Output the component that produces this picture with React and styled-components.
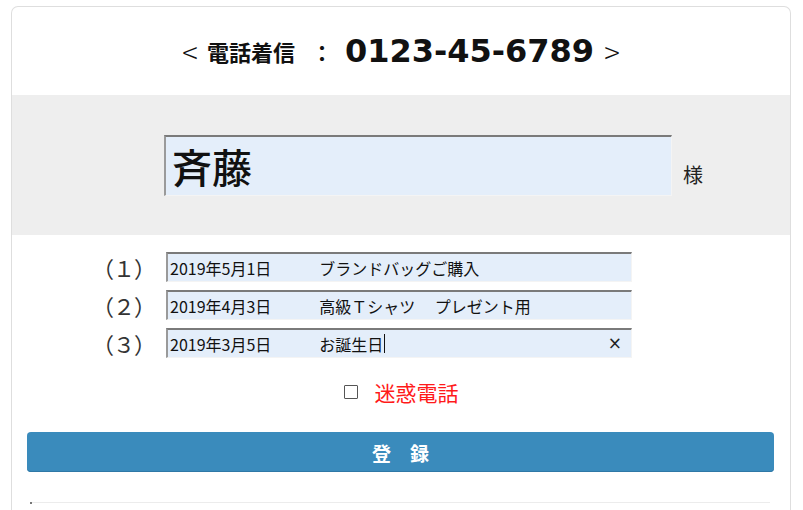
import React from 'react';
import styled, {createGlobalStyle} from 'styled-components';

const GlobalStyle = createGlobalStyle`
  html, body {
    margin: 0;
    padding: 0;
    background: #ffffff;
    overflow: hidden;
  }
  body {
    font-family: "Noto Sans CJK JP", "Noto Sans", sans-serif;
    color: #222;
  }
`;

const Card = styled.div`
  margin: 6px 0 0 11px;
  width: 778px;
  height: 503px;
  border: 1px solid #dedede;
  border-bottom: none;
  border-radius: 7px 7px 0 0;
  background: #fff;
  overflow: hidden;
`;

const Header = styled.div`
  height: 88px;
  display: flex;
  align-items: center;
  justify-content: center;
  color: #111;
`;

const Bracket = styled.span`
  font-family: "Noto Sans CJK JP", sans-serif;
  font-size: 29px;
  font-weight: 300;
  margin: 0 ${p => (p.$right ? 0 : 9)}px 0 ${p => (p.$right ? 10 : 0)}px;
`;

const TitleLabel = styled.span`
  font-family: "Noto Sans CJK JP", sans-serif;
  font-size: 22px;
  font-weight: 700;
`;

const Colon = styled.span`
  font-family: "Noto Sans CJK JP", sans-serif;
  font-size: 22px;
  font-weight: 700;
  margin: 0 12px 0 16px;
`;

const Number = styled.span`
  font-family: "DejaVu Sans", sans-serif;
  font-size: 32px;
  font-weight: 700;
`;

const NameBand = styled.div`
  height: 140px;
  background: #eeeeee;
  display: flex;
  align-items: center;
  padding-left: 152px;
  box-sizing: border-box;
`;

const Field = styled.div`
  position: relative;
  box-sizing: border-box;
  width: ${p => p.$width}px;
  height: ${p => p.$height}px;
  background: #e4eefa;
  border-style: solid;
  border-width: 2px 1px 1px 2px;
  border-color: #7a7a7a #f4f4f4 #f4f4f4 #9a9a9a;
  display: flex;
  align-items: center;
  padding-left: ${p => p.$pad}px;
  font-size: ${p => p.$size}px;
  font-weight: ${p => p.$weight || 400};
  color: #111;
  white-space: pre;
  line-height: 1;
`;

const Honorific = styled.span`
  font-size: 20px;
  color: #222;
  margin: 18px 0 0 11px;
`;

const Rows = styled.div`
  padding: 17px 0 0 80px;
  display: flex;
  flex-direction: column;
  gap: 8px;
`;

const Row = styled.div`
  display: flex;
  align-items: center;
  height: 30px;
`;

const RowLabel = styled.span`
  width: 62px;
  font-size: 22px;
  line-height: 30px;
  color: #333;
  margin-right: 12px;
  letter-spacing: -1px;
  white-space: pre;
`;

const Caret = styled.span`
  display: inline-block;
  width: 1px;
  height: 19px;
  background: #111;
  margin-left: 1px;
`;

const Clear = styled.span`
  position: absolute;
  right: 9px;
  top: 50%;
  transform: translateY(-52%);
  font-family: "DejaVu Sans", sans-serif;
  font-size: 17px;
  color: #222;
`;

const CheckLine = styled.label`
  margin-top: 19px;
  height: 30px;
  display: flex;
  align-items: center;
  justify-content: center;
  gap: 17px;
`;

const Box = styled.span`
  width: 12px;
  height: 12px;
  border: 1px solid #555;
  border-radius: 1px;
  background: #fff;
`;

const WarnText = styled.span`
  font-size: 21px;
  line-height: 30px;
  color: #ff1a1a;
`;

const SubmitButton = styled.button`
  display: block;
  margin: 25px 16px 0 15px;
  width: calc(100% - 31px);
  height: 40px;
  border: none;
  border-radius: 4px;
  background: #3a8bbc;
  box-shadow: inset 0 -1px 0 #2f78a6;
  color: #fff;
  font-family: "Noto Sans CJK JP", sans-serif;
  font-size: 19px;
  font-weight: 700;
  white-space: pre;
`;

const Divider = styled.div`
  position: relative;
  margin: 30px 20px 0 18px;
  border-top: 1px solid #ececec;
  &::before {
    content: '';
    position: absolute;
    left: 0;
    top: -1px;
    width: 2px;
    height: 2px;
    background: #777;
  }
`;

const history = [
  {label: '（１）', text: '2019年5月1日　　　ブランドバッグご購入'},
  {label: '（２）', text: '2019年4月3日　　　高級Ｔシャツ　 プレゼント用'},
  {label: '（３）', text: '2019年3月5日　　　お誕生日', active: true},
];

export default function App() {
  return (
    <>
      <GlobalStyle />
      <Card>
        <Header>
          <Bracket>&lt;</Bracket>
          <TitleLabel>電話着信</TitleLabel>
          <Colon>：</Colon>
          <Number>0123-45-6789</Number>
          <Bracket $right>&gt;</Bracket>
        </Header>
        <NameBand>
          <Field $width={508} $height={61} $pad={6} $size={40} $weight={500}>斉藤</Field>
          <Honorific>様</Honorific>
        </NameBand>
        <Rows>
          {history.map(h => (
            <Row key={h.label}>
              <RowLabel>{h.label}</RowLabel>
              <Field $width={466} $height={30} $pad={2} $size={16}>
                {h.text}
                {h.active && <Caret />}
                {h.active && <Clear>×</Clear>}
              </Field>
            </Row>
          ))}
        </Rows>
        <CheckLine>
          <Box />
          <WarnText>迷惑電話</WarnText>
        </CheckLine>
        <SubmitButton type="button">登　録</SubmitButton>
        <Divider />
      </Card>
    </>
  );
}
